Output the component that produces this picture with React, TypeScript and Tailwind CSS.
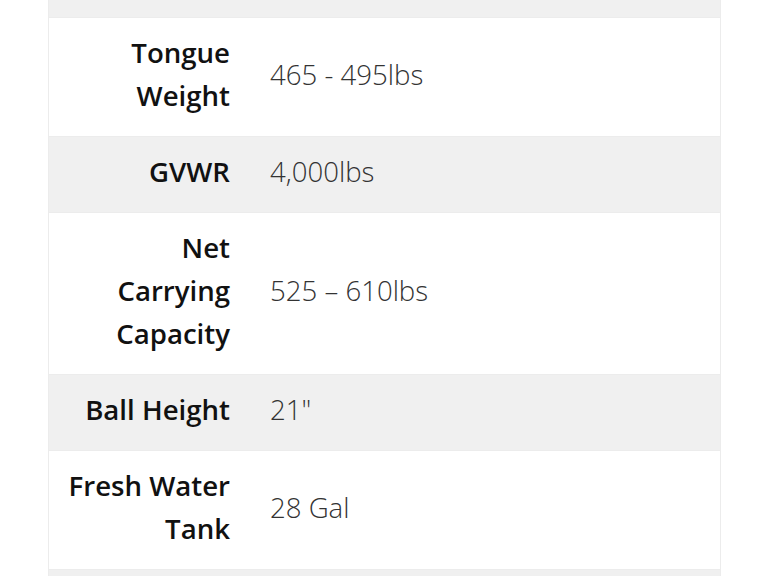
import React from 'react';

const rows: { label: string; value: string }[] = [
  { label: 'Tongue Weight', value: '465 - 495lbs' },
  { label: 'GVWR', value: '4,000lbs' },
  { label: 'Net Carrying Capacity', value: '525 – 610lbs' },
  { label: 'Ball Height', value: '21"' },
  { label: 'Fresh Water Tank', value: '28 Gal' },
];

export default function App() {
  return (
    <div className="h-[576px] overflow-hidden bg-white font-['Open_Sans',sans-serif]">
      <div className="mx-[48px] w-[673px] border-x border-[#ececec]">
        {/* tail of the previous row */}
        <div className="h-[18px] bg-[#f0f0f0] border-b border-[#ececec]" />
        <table className="w-full border-collapse">
          <tbody>
            {rows.map((r, i) => (
              <tr key={r.label} className={i % 2 === 0 ? 'bg-white' : 'bg-[#f0f0f0]'}>
                <td className="w-[201px] border-b border-[#ececec] pl-[17px] pr-[20px] pt-[13px] pb-[19px] text-right align-middle text-[27.6px] leading-[43px] font-semibold text-[#111]">
                  {r.label}
                </td>
                <td className="border-b border-[#ececec] px-[20px] pt-[13px] pb-[19px] align-middle text-[27.6px] leading-[43px] font-light text-[#333]">
                  {r.value}
                </td>
              </tr>
            ))}
          </tbody>
        </table>
        {/* start of the next row */}
        <div className="h-[100px] bg-[#f0f0f0]" />
      </div>
    </div>
  );
}
